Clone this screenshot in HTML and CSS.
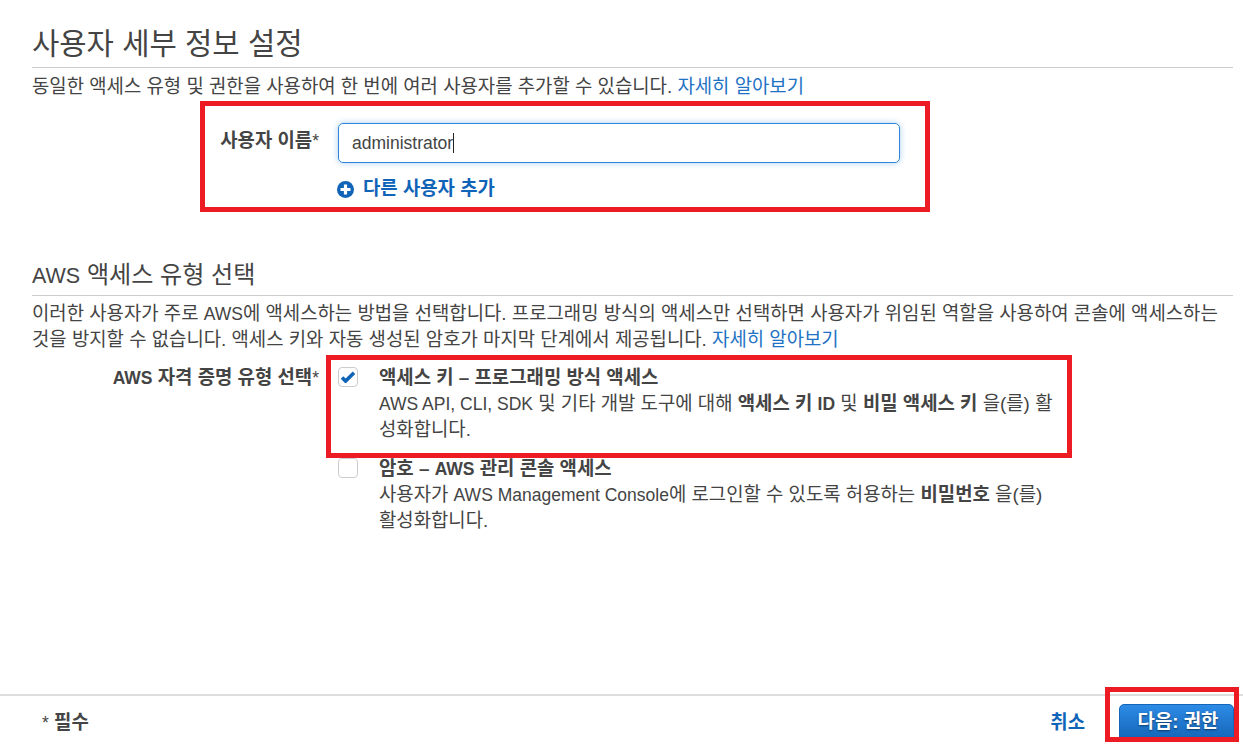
FILE: index.html
```html
<!DOCTYPE html>
<html lang="ko">
<head>
  <meta charset="UTF-8">
  <title>사용자 추가</title>
  <link rel="stylesheet" href="styles.css">
</head>
<body>

  <div class="page">
    <main class="content">
      <h1 class="title">사용자 세부 정보 설정</h1>
      <p class="intro">동일한 액세스 유형 및 권한을 사용하여 한 번에 여러 사용자를 추가할 수 있습니다. <a href="#">자세히 알아보기</a></p>

      <div class="form-row name-row">
        <label class="row-label" for="userName">사용자 이름<span class="star">*</span></label>
        <div class="row-body">
          <div class="name-input" id="userName">administrator<span class="caret"></span></div>
          <a class="add-user" href="#">
            <svg class="plus-icon" viewBox="0 0 17 17" width="17" height="17">
              <circle cx="8.5" cy="8.5" r="8.5" fill="#0f64b8"/>
              <path d="M8.5 3.5v10M3.5 8.5h10" stroke="#fff" stroke-width="3.2"/>
            </svg>
            다른 사용자 추가
          </a>
        </div>
      </div>

      <h2 class="subtitle"><span class="en">AWS</span> 액세스 유형 선택</h2>
      <p class="intro multi">이러한 사용자가 주로 <span class="en">AWS</span>에 액세스하는 방법을 선택합니다. 프로그래밍 방식의 액세스만 선택하면 사용자가 위임된 역할을 사용하여 콘솔에 액세스하는 것을 방지할 수 없습니다. 액세스 키와 자동 생성된 암호가 마지막 단계에서 제공됩니다. <a href="#">자세히 알아보기</a></p>

      <div class="form-row type-row">
        <div class="row-label"><span class="en">AWS</span> 자격 증명 유형 선택<span class="star">*</span></div>
        <div class="options">
          <div class="option">
            <span class="checkbox">
              <svg viewBox="0 0 14 12" width="14" height="12">
                <path d="M1 6.5l3.6 3.6L13 1.8" fill="none" stroke="#0f64b8" stroke-width="3.6"/>
              </svg>
            </span>
            <div class="option-text">
              <div class="option-title">액세스 키 – 프로그래밍 방식 액세스</div>
              <div><span class="en">AWS API, CLI, SDK</span> 및 기타 개발 도구에 대해 <b>액세스 키 <span class="en">ID</span></b> 및 <b>비밀 액세스 키</b> <span class="josa">을(를)</span> 활성화합니다.</div>
            </div>
          </div>
          <div class="option">
            <span class="checkbox"></span>
            <div class="option-text">
              <div class="option-title">암호 – <span class="en">AWS</span> 관리 콘솔 액세스</div>
              <div>사용자가 <span class="en">AWS Management Console</span>에 로그인할 수 있도록 허용하는 <b>비밀번호</b> <span class="josa">을(를)</span><br>활성화합니다.</div>
            </div>
          </div>
        </div>
      </div>
    </main>

    <footer class="footer">
      <div class="required"><span class="star">*</span> 필수</div>
      <a class="cancel" href="#">취소</a>
      <button class="next">다음: 권한</button>
    </footer>
  </div>

  <!-- red marks drawn over the screenshot -->
  <div class="mark mark-name"></div>
  <div class="mark mark-key"></div>
  <div class="mark mark-next"></div>

</body>
</html>
```

FILE: styles.css
```css
* {
  box-sizing: border-box;
}

html, body {
  height: 100%;
}

body {
  margin: 0;
  overflow: hidden;
  background: #fff;
  color: #444;
  font-family: "Liberation Sans", "Noto Sans CJK KR", sans-serif;
  font-size: 18.85px;
}

a {
  color: #1f72c4;
  text-decoration: none;
}

/* latin runs sit a bit smaller than the hangul around them */
.en {
  font-size: 17.5px;
}

.page {
  display: flex;
  flex-direction: column;
  height: 745px;
}

.content {
  flex: 1;
  padding: 29px 10px 0 32px;
}

.title {
  margin: 0;
  height: 39px;
  border-bottom: 1px solid #ccc;
  font-size: 29.7px;
  line-height: 30px;
  font-weight: 400;
}

.intro {
  margin: 6px 0 0;
  line-height: 26px;
}

.form-row {
  display: flex;
}

.row-label {
  width: 287px;
  text-align: right;
  font-weight: 700;
  white-space: nowrap;
}

.star {
  font-weight: 400;
  font-size: 17.5px;
}

.row-body {
  margin-left: 19px;
}

.name-row {
  margin-top: 23px;
}

.name-row .row-label {
  line-height: 35px;
}

.name-input {
  display: flex;
  align-items: center;
  width: 562px;
  height: 40px;
  padding-left: 13px;
  border: 1px solid #2f86d8;
  border-radius: 5px;
  box-shadow: 0 0 6px rgba(47, 134, 216, 0.4);
  font-size: 17.5px;
}

.caret {
  width: 1px;
  height: 20px;
  background: #222;
}

.add-user {
  display: flex;
  align-items: center;
  gap: 9px;
  margin-top: 14px;
  margin-left: -1px;
  color: #0f64b8;
  font-weight: 700;
  line-height: 24px;
}

.subtitle {
  margin: 62px 0 0;
  height: 33px;
  border-bottom: 1px solid #ccc;
  font-size: 24.1px;
  line-height: 24px;
  font-weight: 400;
}

.subtitle .en {
  font-size: 21.5px;
}

.multi {
  margin-top: 5px;
}

.type-row {
  margin-top: 12px;
}

.type-row .row-label {
  line-height: 26px;
}

.options {
  display: flex;
  flex-direction: column;
  gap: 13px;
  margin-left: 19px;
  width: 720px;
}

.option {
  display: flex;
  gap: 21px;
}

.checkbox {
  display: flex;
  flex: none;
  align-items: center;
  justify-content: center;
  width: 20px;
  height: 20px;
  margin-top: 2px;
  border: 1px solid #ccc;
  border-radius: 4px;
}

.option-text {
  line-height: 26px;
}

.option-title {
  font-weight: 700;
}

.josa {
  white-space: nowrap;
}

.footer {
  display: flex;
  align-items: center;
  height: 51px;
  padding: 0 9px 0 42px;
  border-top: 2px solid #ddd;
}

.required {
  flex: 1;
  font-weight: 700;
}

.cancel {
  margin-right: 34px;
  color: #0f64b8;
  font-weight: 700;
}

.next {
  width: 115px;
  height: 36px;
  margin-top: 3px;
  padding: 0 0 5px 3px;
  border: 1px solid #1566b8;
  border-radius: 5px 5px 0 0;
  background: linear-gradient(#2d8be6, #1566b8);
  color: #fff;
  font: inherit;
  font-weight: 700;
  text-shadow: 0 1px 2px rgba(0, 0, 0, 0.5);
}

.mark {
  position: absolute;
  border: 5px solid #ed1c24;
}

.mark-name {
  left: 200px;
  top: 101px;
  width: 730px;
  height: 111px;
}

.mark-key {
  left: 326px;
  top: 355px;
  width: 746px;
  height: 103px;
}

.mark-next {
  left: 1105px;
  top: 687px;
  width: 134px;
  height: 55px;
}
```
